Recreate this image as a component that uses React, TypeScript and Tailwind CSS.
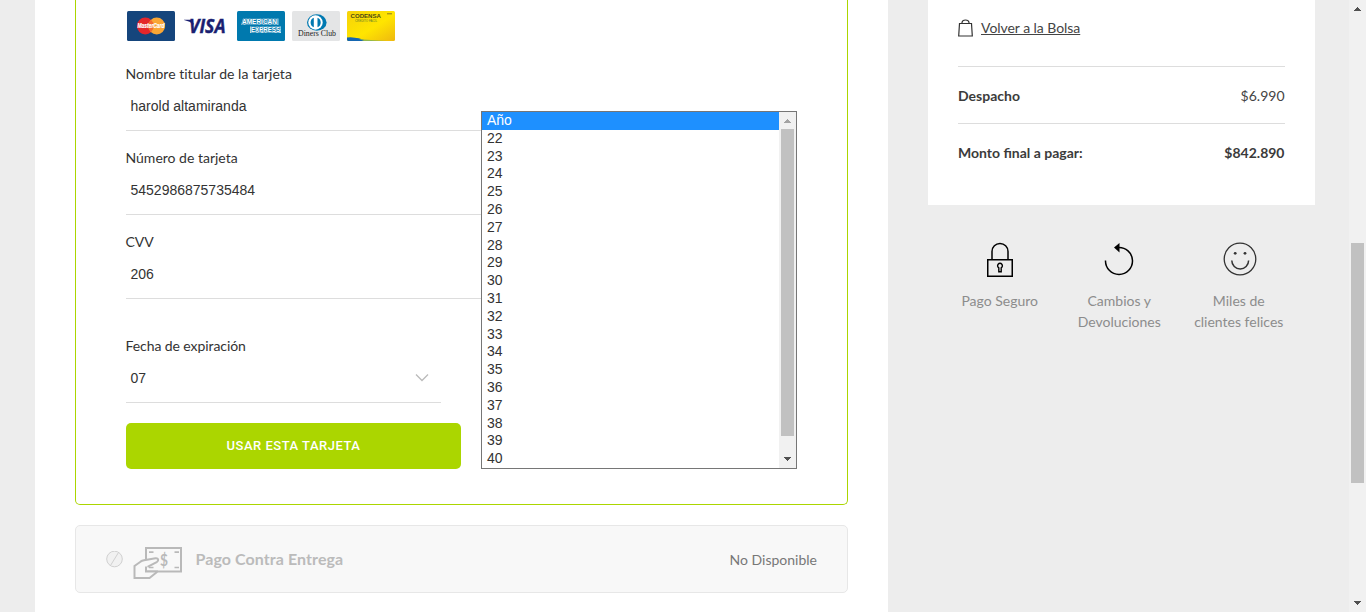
import type { ReactNode } from "react";

const YEARS = ["Año", "22", "23", "24", "25", "26", "27", "28", "29", "30", "31", "32", "33", "34", "35", "36", "37", "38", "39", "40"];

function Field({ label, value, className = "" }: { label: string; value: string; className?: string }) {
  return (
    <div className="flex h-[84px] flex-col">
      <label className={`-ml-[0.5px] h-[21px] text-[14px] leading-[21px] text-[#333] [font-variant-ligatures:none] ${className}`}>{label}</label>
      <div className="flex h-[47px] items-start border-b border-[#ddd] pt-[12px] pl-[4.5px] font-['Liberation_Sans',Arial,sans-serif] text-[14px] leading-[20px] text-[#333]">
        {value}
      </div>
    </div>
  );
}

function CardLogos() {
  return (
    <div className="flex h-[30px] gap-[7px] pl-px">
      <svg width="48" height="30" viewBox="0 0 48 30">
        <rect width="48" height="30" rx="1.5" fill="#15457c" />
        <circle cx="18.3" cy="15" r="8.4" fill="#e4262b" />
        <circle cx="29.7" cy="15" r="8.4" fill="#faa634" />
        <path d="M24 8.8a8.4 8.4 0 0 1 0 12.4a8.4 8.4 0 0 1 0-12.4" fill="#f26a2e" />
        <text x="24" y="17.3" textAnchor="middle" textLength="27" lengthAdjust="spacingAndGlyphs" fontFamily="Liberation Sans" fontWeight="bold" fontStyle="italic" fontSize="6.5" fill="#fff" stroke="#fff" strokeWidth=".2">MasterCard</text>
      </svg>
      <svg width="48" height="30" viewBox="0 0 48 30">
        <text x="7" y="22.3" textLength="36.5" lengthAdjust="spacingAndGlyphs" fontFamily="Open Sans, sans-serif" fontWeight="bold" fontStyle="italic" fontSize="19" fill="#1a1f71" stroke="#1a1f71" strokeWidth=".4">VISA</text>
        <path d="M2 8.8h8l2 5Q8 10.2 2 9z" fill="#1a1f71" />
      </svg>
      <svg width="48" height="30" viewBox="0 0 48 30">
        <rect width="48" height="30" rx="1.5" fill="#0079ae" />
        <path d="M6 7.5h35.5V14H4z" fill="#9fcde1" />
        <path d="M13 15.5h31V22H13z" fill="#c5e1ed" />
        <text x="5" y="13.4" textLength="35" lengthAdjust="spacingAndGlyphs" fontFamily="Liberation Sans" fontWeight="bold" fontSize="7" fill="#fff" stroke="#0079ae" strokeWidth="1.2" paintOrder="stroke">AMERICAN</text>
        <text x="14" y="21.3" textLength="29" lengthAdjust="spacingAndGlyphs" fontFamily="Liberation Sans" fontWeight="bold" fontSize="7" fill="#fff" stroke="#0079ae" strokeWidth="1.2" paintOrder="stroke">EXPRESS</text>
      </svg>
      <svg width="48" height="30" viewBox="0 0 48 30">
        <rect width="48" height="30" rx="1.5" fill="#e4e5e6" />
        <ellipse cx="24.8" cy="11.5" rx="9.8" ry="8.3" fill="#0079b1" />
        <circle cx="23.5" cy="11.5" r="7.2" fill="#fff" />
        <path d="M21.8 6.7a5.2 5.2 0 0 0 0 9.6zM25.5 6.7a5.2 5.2 0 0 1 0 9.6z" fill="#0079b1" />
        <text x="6" y="25" textLength="38" lengthAdjust="spacingAndGlyphs" fontFamily="Liberation Serif" fontSize="8.5" fill="#222">Diners Club</text>
      </svg>
      <svg width="48" height="30" viewBox="0 0 48 30">
        <defs>
          <linearGradient id="gold" x1="0" y1="0" x2="1" y2="1">
            <stop offset="0" stopColor="#f5d20a" />
            <stop offset=".55" stopColor="#ffe500" />
            <stop offset="1" stopColor="#eeb810" />
          </linearGradient>
          <clipPath id="goldCard"><rect width="48" height="30" rx="1.5" /></clipPath>
        </defs>
        <g clipPath="url(#goldCard)">
          <rect width="48" height="30" fill="url(#gold)" />
          <path d="M0 26.5q10-1 20 3.5H0z" fill="#1566b0" />
          <path d="M12 28q10 1 28 2H17z" fill="#94b84a" />
          <text x="3.5" y="6.8" textLength="30.5" lengthAdjust="spacingAndGlyphs" fontFamily="Liberation Sans" fontWeight="bold" fontSize="6" fill="#4b4a13">CODENSA</text>
          <text x="8" y="11" textLength="22" lengthAdjust="spacingAndGlyphs" fontFamily="Liberation Sans" fontSize="3.8" fill="#5b7b2b">CREDITO FACIL</text>
          <path d="M40 2.8h5" stroke="#8a7b1d" strokeWidth="1" />
        </g>
      </svg>
    </div>
  );
}

function YearList() {
  return (
    <div className="absolute top-[111px] left-[405px] flex h-[358px] w-[316px] border border-[#767676] bg-white font-['Liberation_Sans',Arial,sans-serif] text-[14px] text-[#333]">
      <div className="flex-1">
        {YEARS.map((y, i) => (
          <div key={y} className={`h-[17.8px] pl-[5px] leading-[17px] ${i === 0 ? "bg-[#1e90ff] text-white" : ""}`}>{y}</div>
        ))}
      </div>
      <div className="flex w-[17px] flex-col items-center bg-[#f1f1f1]">
        <svg width="17" height="17" shapeRendering="crispEdges"><path d="M5 11h7l-3.5-4z" fill="#a3a3a3" /></svg>
        <div className="h-[307px] w-[13px] bg-[#c1c1c1]" />
        <div className="flex-1" />
        <svg width="17" height="17" shapeRendering="crispEdges"><path d="M5 6h7l-3.5 4z" fill="#505050" /></svg>
      </div>
    </div>
  );
}

function CashIcon() {
  return (
    <svg width="50" height="34" viewBox="0 0 50 34" fill="none" stroke="#b9b9b9" strokeWidth="2">
      <path d="M13 2h35v23.5H13z" />
      <path d="M16 6.2h4.5M41.5 6.2H46M41.5 21.5H46M16 21.5h4.5" strokeWidth="1.7" />
      <path d="M1.5 32V20l6-4.5q1.5-1 3.5-1.4l11.5-2c3-.4 4 2.2 1.2 3.8L15 20.5l-1 4.5h11l-8.5 7z" fill="#f8f8f8" stroke="none" />
      <path d="M13 20.5v5h12" />
      <path d="M14.5 20.8l9.2-4.7c2.6-1.6 1.6-4.2-1.2-3.8l-11.5 2q-2 .4-3.5 1.4L1.5 20v12H16.5l7.5-6" />
      <text x="31" y="20.2" textAnchor="middle" fontFamily="Lato, sans-serif" fontWeight="bold" fontSize="17" textLength="8" lengthAdjust="spacingAndGlyphs" fill="#b9b9b9" stroke="none">$</text>
    </svg>
  );
}

function Benefit({ icon, children }: { icon: ReactNode; children: ReactNode }) {
  return (
    <div className="flex w-[119.5px] flex-col items-center text-center text-[14px] leading-[21px] text-[#8c8c8c]">
      <div className="mb-[12px] h-[36px]">{icon}</div>
      {children}
    </div>
  );
}

export default function App() {
  return (
    <div className="flex h-[612px] w-[1366px] overflow-hidden bg-[#ededed] font-['Lato',sans-serif] text-[#333]">
      <main className="ml-[35px] h-full w-[853px] shrink-0 bg-white px-[40px]">
        <section className="relative flex h-[505px] w-[773px] flex-col rounded-b-[5px] border-x border-b border-[#abd600] pt-[11px] pl-[50px]">
          <CardLogos />
          <div className="mt-[22px] w-[670px]">
            <Field label="Nombre titular de la tarjeta" value="harold altamiranda" className="tracking-[0.02px]" />
            <Field label="Número de tarjeta" value="5452986875735484" />
            <Field label="CVV" value="206" />
          </div>
          <div className="relative mt-[20px] w-[315px]">
            <Field label="Fecha de expiración" value="07" className="tracking-[-0.08px]" />
            <svg className="absolute top-[38px] right-[12px]" width="14" height="10" fill="none" stroke="#bbb" strokeWidth="1.3"><path d="M1 1.5l6 6 6-6" /></svg>
          </div>
          <button className="mt-[4px] h-[46px] w-[335px] rounded-[5px] bg-[#abd600] font-['Roboto',sans-serif] text-[13px] font-medium tracking-[0.5px] text-white">USAR ESTA TARJETA</button>
          <YearList />
        </section>
        <section className="mt-[20px] flex h-[68px] w-[773px] items-center rounded-[5px] border border-[#e7e7e7] bg-[#f8f8f8] pr-[30px] pl-[30px]">
          <svg width="17" height="17" fill="#f1f1f1" stroke="#d0d0d0"><circle cx="8.5" cy="8" r="7.8" /><path d="M4.5 14.5L12.5 1.5" /></svg>
          <div className="mt-[7px] ml-[9.5px]"><CashIcon /></div>
          <span className="ml-[13px] text-[16px] font-bold tracking-[0.08px] text-[#bbb]">Pago Contra Entrega</span>
          <span className="ml-auto text-[14px] text-[#777]">No Disponible</span>
        </section>
      </main>

      <aside className="ml-[40px] w-[387px] shrink-0">
        <div className="h-[205px] bg-white px-[30px]">
          <div className="flex h-[67px] items-start border-b border-[#ddd] pt-[17px]">
            <svg className="mt-[2px]" width="15" height="19" viewBox="0 0 15 19" fill="none" stroke="#333" strokeWidth="1.2"><path d="M1.5 4.5h12l.8 12.5H.7zM4 5V3.5q.3-2.5 3.5-2.5T11 3.5V5" /></svg>
            <a className="ml-[8px] text-[14px] leading-[21px] tracking-[-0.05px] text-[#444] underline">Volver a la Bolsa</a>
          </div>
          <div className="flex h-[57px] items-center justify-between border-b border-[#ddd] pt-px text-[14px]">
            <strong className="text-[#3b3b3b]">Despacho</strong>
            <span className="pr-[0.5px] text-[#444]">$6.990</span>
          </div>
          <div className="flex h-[57px] items-center justify-between text-[14px] font-bold text-[#3b3b3b]">
            <span>Monto final a pagar:</span>
            <span className="pr-[0.5px]">$842.890</span>
          </div>
        </div>
        <div className="mt-[37px] ml-[12px] flex w-[359px]">
          <Benefit icon={
            <svg width="28" height="36" viewBox="0 0 28 36" fill="none" stroke="#000" strokeWidth="1.5">
              <path d="M1.75 17.75h24.5v16.5H1.75zM6 17V9.5a8 8 0 0 1 16 0V17" />
              <path d="M12.8 25.8a2.4 2.4 0 1 1 2.4 0v4h-2.4z" strokeWidth="1.4" />
            </svg>
          }>Pago Seguro</Benefit>
          <Benefit icon={
            <svg width="30" height="36" viewBox="0 0 30 36" fill="none" stroke="#000" strokeWidth="1.5">
              <path d="M1.5 18.5A13.5 13.5 0 1 0 14 5.500" /><path d="M10 5.5L15.5 1v9.5z" fill="#000" stroke="none" />
            </svg>
          }>Cambios y<br />Devoluciones</Benefit>
          <Benefit icon={
            <svg width="36" height="36" viewBox="0 0 36 36" fill="none" stroke="#333" strokeWidth="1.3">
              <circle cx="19" cy="17" r="15.8" /><path d="M10.8 18.5a8.300 8.300 0 0 0 16.8 0" strokeWidth="1.5" />
              <circle cx="14.2" cy="11.3" r="1.4" fill="#333" stroke="none" /><circle cx="24" cy="11.3" r="1.4" fill="#333" stroke="none" />
            </svg>
          }>Miles de<br />clientes felices</Benefit>
        </div>
      </aside>
      <div className="ml-auto flex w-[17px] flex-col items-center bg-[#f1f1f1]">
        <svg width="17" height="17" shapeRendering="crispEdges"><path d="M5 11h7l-3.5-4z" fill="#505050" /></svg>
        <div className="mt-[226px] h-[240px] w-[13px] bg-[#c1c1c1]" />
        <svg className="mt-auto" width="17" height="17" shapeRendering="crispEdges"><path d="M5 6h7l-3.5 4z" fill="#505050" /></svg>
      </div>
    </div>
  );
}
